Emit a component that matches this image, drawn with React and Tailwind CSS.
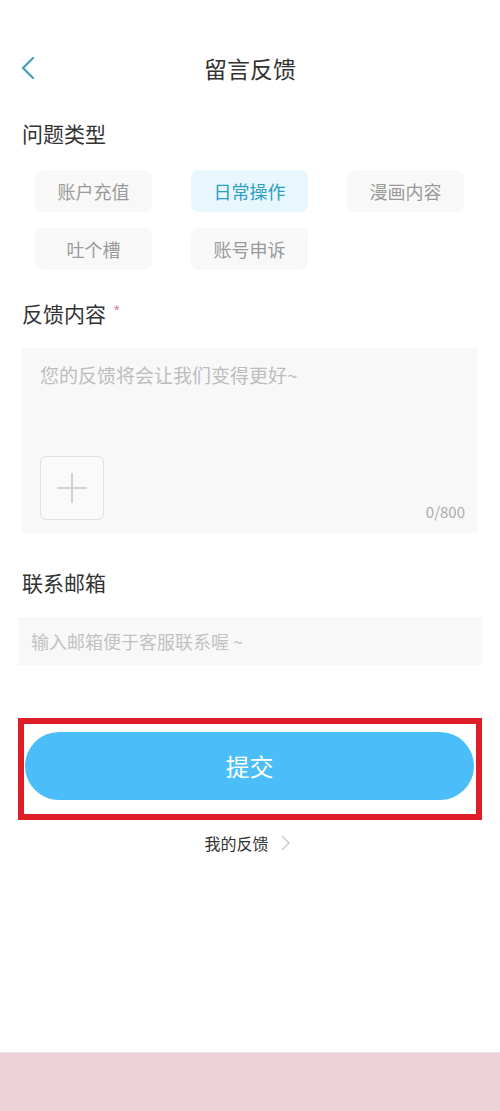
import React from 'react';

const types = ['账户充值', '日常操作', '漫画内容', '吐个槽', '账号申诉'];

export default function App() {
  const selected = '日常操作';
  return (
    <div
      className="flex min-h-[1111px] w-[500px] flex-col bg-white text-[#333]"
      style={{ fontFamily: '"Noto Sans CJK SC", "Noto Sans", sans-serif' }}
    >
      <header className="relative mt-[40px] flex h-[56px] items-center justify-center">
        <button className="absolute left-[20px] top-[16px] flex h-[24px] w-[16px] items-center justify-center">
          <svg width="14" height="22" viewBox="0 0 14 22" fill="none">
            <path d="M12 1 L2 11 L12 21" stroke="#3ea3bb" strokeWidth="2.2" strokeLinecap="round" strokeLinejoin="round" />
          </svg>
        </button>
        <h1 className="text-[23px] leading-[30px] text-[#333]">留言反馈</h1>
      </header>

      <section className="px-[22px]">
        <h2 className="mt-[23px] text-[21px] leading-[28px]">问题类型</h2>
        <div className="mt-[23px] grid grid-cols-[117px_117px_117px] gap-x-[39px] gap-y-[16px] pl-[13px]">
          {types.map((t) => (
            <div
              key={t}
              className={
                t === selected
                  ? 'flex h-[42px] items-center justify-center rounded-[8px] bg-[#e7f7fd] text-[18px] text-[#2b9fc2]'
                  : 'flex h-[42px] items-center justify-center rounded-[8px] bg-[#f8f8f8] text-[18px] text-[#9a9a9a]'
              }
            >
              {t}
            </div>
          ))}
        </div>

        <h2 className="mt-[29px] flex items-start text-[21px] leading-[28px]">
          反馈内容<span className="ml-[7px] text-[16px] leading-[24px] text-[#e28aa8]">*</span>
        </h2>
        <div className="relative mt-[21px] h-[185px] rounded-[2px] bg-[#f8f8f8] px-[18px] pt-[14px]">
          <p className="text-[19px] leading-[26px] text-[#bdbdbd]">您的反馈将会让我们变得更好~</p>
          <div className="mt-[68px] flex h-[64px] w-[64px] items-center justify-center rounded-[6px] border border-[#e2e2e2] bg-[#fafafa]">
            <svg width="34" height="34" viewBox="0 0 34 34">
              <path d="M17 2 V32 M2 17 H32" stroke="#d2d2d2" strokeWidth="2" />
            </svg>
          </div>
          <span className="absolute bottom-[12px] right-[13px] text-[15px] leading-[18px] text-[#ababab]">0/800</span>
        </div>

        <h2 className="mt-[35px] text-[21px] leading-[28px]">联系邮箱</h2>
      </section>

      <div className="mx-[18px] mt-[21px] flex h-[48px] items-center bg-[#f8f8f8] px-[13px]">
        <span className="text-[18px] text-[#c2c2c2]">输入邮箱便于客服联系喔 ~</span>
      </div>

      <div className="mx-[18px] mt-[53px] h-[102px] border-[6px] border-[#e01e28] pl-[1px] pt-[8px]">
        <button className="flex h-[68px] w-[449px] items-center justify-center rounded-full bg-[#4bbefa] text-[24px] text-white">
          提交
        </button>
      </div>

      <div className="mt-[13px] flex items-center justify-center gap-[12px] text-[16px] leading-[20px] text-[#333]">
        <span className="ml-[-6px]">我的反馈</span>
        <svg width="9" height="16" viewBox="0 0 9 16" fill="none">
          <path d="M1 1 L8 8 L1 15" stroke="#c8c8c8" strokeWidth="1.3" />
        </svg>
      </div>

      <div className="flex-1" />
      <footer className="h-[59px] border-t border-[#ebe5e7] bg-[#edd3d9]" />
    </div>
  );
}
